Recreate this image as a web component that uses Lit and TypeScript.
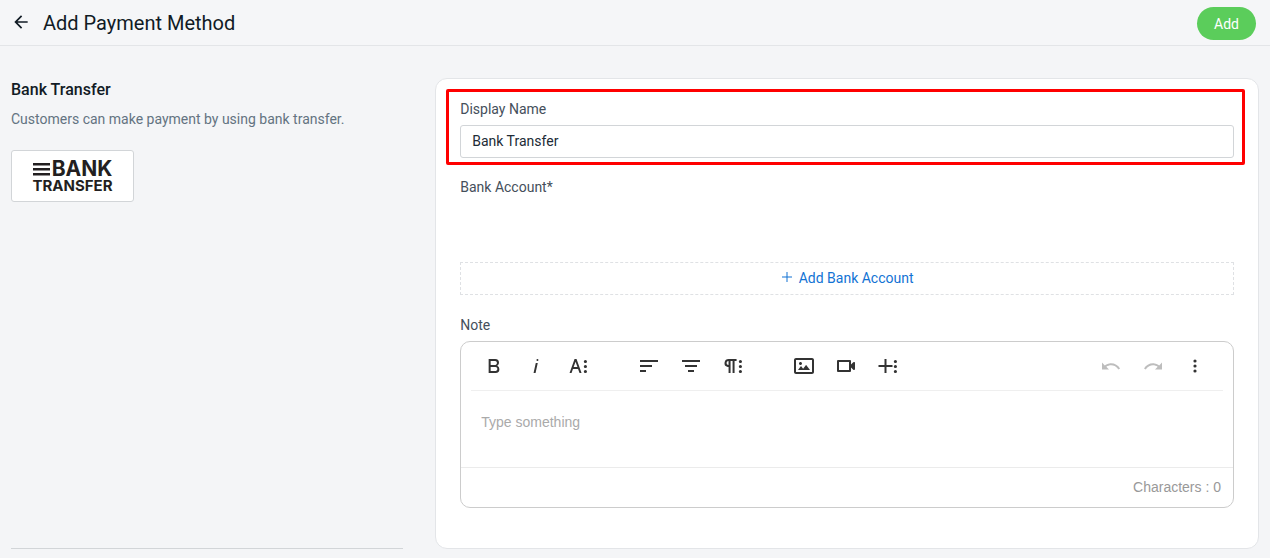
import { LitElement, html, css, svg } from "lit";
import { customElement, property } from "lit/decorators.js";

const DOTS =
  "M21,17.5a1.6,1.6,0,1,1-3.2,0a1.6,1.6,0,1,1,3.2,0ZM21,12.5a1.6,1.6,0,1,1-3.2,0a1.6,1.6,0,1,1,3.2,0ZM21,7.5a1.6,1.6,0,1,1-3.2,0a1.6,1.6,0,1,1,3.2,0Z";

const ICONS: Record<string, string> = {
  back: "M20 11H7.83l5.59-5.59L12 4l-8 8 8 8 1.41-1.41L7.83 13H20v-2z",
  bold: "M15.25,11.8h0A3.68,3.68,0,0,0,17,9a3.93,3.93,0,0,0-3.86-4H6.65V19h7a3.74,3.74,0,0,0,3.7-3.78V15.1A3.64,3.64,0,0,0,15.25,11.8ZM8.65,7h4.2a2.09,2.09,0,0,1,2,1.3,2.09,2.09,0,0,1-1.37,2.61,2.23,2.23,0,0,1-.63.09H8.65Zm4.6,10H8.65V13h4.6a2.09,2.09,0,0,1,2,1.3,2.09,2.09,0,0,1-1.37,2.61A2.23,2.23,0,0,1,13.25,17Z",
  italic: "M11.76,9h2l-2.2,10h-2Zm1.68-4a1,1,0,1,0,1,1,1,1,0,0,0-1-1Z",
  textMore: "M13.55,19h2l-5-14h-2l-5,14h2l1.4-4h5.1Zm-5.9-6,1.9-5.2L11.45,13Z" + DOTS,
  alignLeft: "M3,18h6v-2H3V18z M3,6v2h18V6H3z M3,13h12v-2H3V13z",
  alignCenter: "M9,18h6v-2H9V18z M3,6v2h18V6H3z M6,13h12v-2H6V13z",
  paragraphMore:
    "M7.682,5a4.11,4.11,0,0,0-4.07,3.18,4,4,0,0,0,3.11,4.725l.027.005a3.766,3.766,0,0,0,.82.09v6h2V7h2V19h2V7h2V5ZM5.532,9a2,2,0,0,1,2-2v4A2,2,0,0,1,5.532,9Z" +
    DOTS,
  image:
    "M14.2,11l3.8,5H6l3-3.9l2.1,2.7L14,11H14.2z M8.5,11c0.8,0,1.5-0.7,1.5-1.5S9.3,8,8.5,8S7,8.7,7,9.5C7,10.3,7.7,11,8.5,11z M22,6v12c0,1.1-0.9,2-2,2H4c-1.1,0-2-0.9-2-2V6c0-1.1,0.9-2,2-2h16C21.1,4,22,4.9,22,6z M20,8.8V6H4v12h16V8.8z",
  video:
    "M15,8v8H5V8H15m2,2.5V7a1,1,0,0,0-1-1H4A1,1,0,0,0,3,7V17a1,1,0,0,0,1,1H16a1,1,0,0,0,1-1V13.5l2.29,2.29A1,1,0,0,0,21,15.08V8.91a1,1,0,0,0-1.71-.71Z",
  insertMore: "M16.5,13h-6v6h-2V13h-6V11h6V5h2v6h6Z" + DOTS,
  undo: "M10.4,9.4c-1.7,0.3-3.2,0.9-4.6,2L3,8.5v7h7l-2.7-2.7c3.7-2.6,8.8-1.8,11.5,1.9c0.2,0.2,0.3,0.5,0.5,0.7l1.8-0.9C18.9,10.8,14.7,8.7,10.4,9.4z",
  redo: "M13.6,9.4c1.7,0.3,3.2,0.9,4.6,2L21,8.5v7h-7l2.7-2.7C13,10.1,7.9,11,5.3,14.7c-0.2,0.2-0.3,0.5-0.5,0.7L3,14.5C5.1,10.8,9.3,8.7,13.6,9.4z",
  more: "M13.6,17a1.6,1.6,0,1,1-3.2,0a1.6,1.6,0,1,1,3.2,0ZM13.6,12a1.6,1.6,0,1,1-3.2,0a1.6,1.6,0,1,1,3.2,0ZM13.6,7a1.6,1.6,0,1,1-3.2,0a1.6,1.6,0,1,1,3.2,0Z",
  plus: "M11 2h2v9h9v2h-9v9h-2v-9H2v-2h9z",
};

const icon = (name: string, size = 24) => html`
  <svg width=${size} height=${size} viewBox="0 0 24 24" aria-hidden="true">
    ${svg`<path d=${ICONS[name]} fill="currentColor"></path>`}
  </svg>
`;

interface Tool {
  icon: string;
  label: string;
  disabled?: boolean;
}

const TOOL_GROUPS: Tool[][] = [
  [
    { icon: "bold", label: "Bold" },
    { icon: "italic", label: "Italic" },
    { icon: "textMore", label: "More Text" },
  ],
  [
    { icon: "alignLeft", label: "Align Left" },
    { icon: "alignCenter", label: "Align Center" },
    { icon: "paragraphMore", label: "More Paragraph" },
  ],
  [
    { icon: "image", label: "Insert Image" },
    { icon: "video", label: "Insert Video" },
    { icon: "insertMore", label: "More Rich" },
  ],
  [
    { icon: "undo", label: "Undo", disabled: true },
    { icon: "redo", label: "Redo", disabled: true },
    { icon: "more", label: "More Misc" },
  ],
];

@customElement("note-editor")
export class NoteEditor extends LitElement {
  @property({ type: Number }) count = 0;

  static styles = css`
    :host {
      display: block;
      border: 1px solid #cccccc;
      border-radius: 10px;
      background: #ffffff;
      font-family: "Liberation Sans", Arial, sans-serif;
      font-size: 14px;
    }
    .toolbar {
      display: flex;
      gap: 29px;
      margin: 0 10px;
      padding: 5px 7px 5px 2px;
      border-bottom: 1px solid #efefef;
    }
    .group {
      display: flex;
    }
    .group:last-child {
      margin-left: auto;
    }
    .tool {
      display: flex;
      align-items: center;
      justify-content: center;
      width: 42px;
      height: 38px;
      padding: 0;
      border: 0;
      background: none;
      color: #333333;
    }
    .tool:disabled {
      color: #bdbdbd;
    }
    .text {
      display: block;
      box-sizing: border-box;
      width: 100%;
      height: 76px;
      padding: 20px;
      border: 0;
      outline: 0;
      resize: none;
      background: none;
      font: inherit;
      line-height: 22px;
      color: #414141;
    }
    .text::placeholder {
      color: #aaaaaa;
      opacity: 1;
    }
    .counter {
      padding: 10px 12px;
      border-top: 1px solid #ebebeb;
      line-height: 19px;
      text-align: right;
      color: #999999;
    }
  `;

  private onInput(e: Event) {
    this.count = (e.target as HTMLTextAreaElement).value.length;
  }

  render() {
    return html`
      <div class="toolbar" role="toolbar" aria-label="Formatting">
        ${TOOL_GROUPS.map(
          (group) => html`<div class="group">
            ${group.map(
              (t) => html`<button
                class="tool"
                type="button"
                aria-label=${t.label}
                ?disabled=${t.disabled}
              >
                ${icon(t.icon)}
              </button>`
            )}
          </div>`
        )}
      </div>
      <textarea
        class="text"
        aria-label="Note"
        placeholder="Type something"
        @input=${this.onInput}
      ></textarea>
      <div class="counter">Characters : ${this.count}</div>
    `;
  }
}

@customElement("app-root")
export class AppRoot extends LitElement {
  static styles = css`
    :host {
      display: block;
      min-height: 100vh;
      background: #f4f5f7;
      font-family: Roboto, sans-serif;
      font-size: 14px;
      line-height: 20px;
      color: #212b36;
    }
    .header {
      display: flex;
      align-items: center;
      gap: 12px;
      box-sizing: border-box;
      height: 46px;
      padding: 0 14px 0 11px;
      border-bottom: 1px solid #e3e5e8;
      background: #f5f6f8;
    }
    .back {
      display: flex;
      padding: 0 0 2px;
      border: 0;
      background: none;
      color: #111b25;
    }
    .title {
      flex: 1;
      margin: 0;
      font-size: 20px;
      font-weight: 400;
      line-height: 28px;
      color: #111b25;
    }
    .add {
      height: 33px;
      margin-top: 2px;
      padding: 0 17px;
      border: 0;
      border-radius: 17px;
      background: #5bcd5b;
      font: inherit;
      color: #ffffff;
    }
    .content {
      display: grid;
      grid-template-columns: 1fr 2.1fr;
      gap: 32px;
      padding: 32px 11px 9px;
    }
    .summary {
      border-bottom: 1px solid #d2d5d8;
    }
    .name {
      margin: 2px 0 9px;
      font-size: 16px;
      font-weight: 500;
      line-height: 20px;
      color: #111b25;
    }
    .about {
      margin: 0 0 21px;
      color: #637381;
    }
    .logo {
      display: flex;
      flex-direction: column;
      align-items: center;
      justify-content: center;
      box-sizing: border-box;
      width: 123px;
      height: 52px;
      border: 1px solid #d2d5d8;
      border-radius: 3px;
      background: #ffffff;
      font-family: Inter, sans-serif;
      font-weight: 700;
      color: #231f20;
    }
    .logo-top {
      display: flex;
      align-items: center;
      gap: 2px;
      font-size: 21px;
      line-height: 18px;
    }
    .logo-bottom {
      font-size: 15px;
      line-height: 15px;
    }
    .card {
      padding: 20px 24px 40px;
      border: 1px solid #e3e5e8;
      border-radius: 12px;
      background: #ffffff;
    }
    .field {
      position: relative;
      margin-bottom: 20px;
    }
    .field:first-child {
      margin-bottom: 19px;
    }
    .highlight {
      position: absolute;
      inset: -10px -11px -7px -14px;
      border: 3px solid #ff0000;
      border-radius: 2px;
      pointer-events: none;
    }
    .label {
      display: block;
      margin-bottom: 6px;
      color: #454f5b;
    }
    .input {
      display: block;
      box-sizing: border-box;
      width: 100%;
      height: 33px;
      padding: 0 11px 2px;
      border: 1px solid #d2d5d8;
      border-radius: 3px;
      background: #ffffff;
      font: inherit;
      color: #212b36;
    }
    .accounts {
      min-height: 59px;
    }
    .add-account {
      display: flex;
      align-items: center;
      justify-content: center;
      gap: 6px;
      width: 100%;
      height: 33px;
      padding: 0 0 2px;
      border: 1px dashed #dfe1e4;
      background: none;
      font: inherit;
      color: #1273d4;
    }
    .add-account svg {
      padding-bottom: 2px;
    }
  `;

  render() {
    return html`
      <header class="header">
        <button class="back" type="button" aria-label="Back">${icon("back", 20)}</button>
        <h1 class="title">Add Payment Method</h1>
        <button class="add" type="button">Add</button>
      </header>
      <main class="content">
        <section class="summary">
          <h2 class="name">Bank Transfer</h2>
          <p class="about">Customers can make payment by using bank transfer.</p>
          <div class="logo">
            <div class="logo-top">
              <svg width="17" height="14" viewBox="0 0 17 14" aria-hidden="true">
                <path d="M0 1h17v2.4H0zM0 6h17v2.4H0zM0 11h17v2.4H0z" fill="currentColor"></path>
              </svg>
              <span>BANK</span>
            </div>
            <div class="logo-bottom">TRANSFER</div>
          </div>
        </section>
        <form class="card">
          <div class="field">
            <label class="label" for="display-name">Display Name</label>
            <input class="input" id="display-name" type="text" value="Bank Transfer" />
            <div class="highlight"></div>
          </div>
          <div class="field">
            <span class="label">Bank Account*</span>
            <div class="accounts"></div>
            <button class="add-account" type="button">
              ${icon("plus", 12)}<span>Add Bank Account</span>
            </button>
          </div>
          <span class="label">Note</span>
          <note-editor></note-editor>
        </form>
      </main>
    `;
  }
}
